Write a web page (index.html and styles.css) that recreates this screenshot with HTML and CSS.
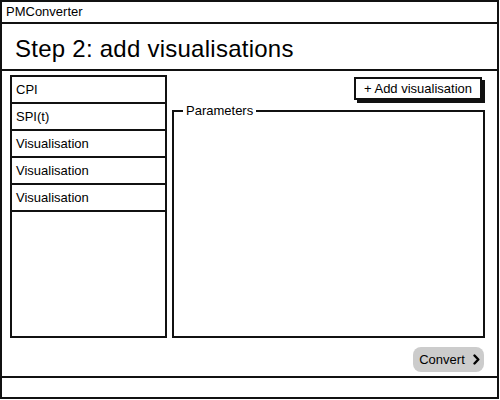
FILE: index.html
```html
<!DOCTYPE html>
<html>
<head>
<meta charset="utf-8">
<link rel="stylesheet" href="styles.css">
</head>
<body>
<div class="app">
  <div class="titlebar">PMConverter</div>
  <div class="header"><h1 class="title">Step 2: add visualisations</h1></div>
  <div class="main">
    <div class="row">
      <ul class="list">
        <li class="item">CPI</li>
        <li class="item">SPI(t)</li>
        <li class="item">Visualisation</li>
        <li class="item">Visualisation</li>
        <li class="item">Visualisation</li>
      </ul>
      <div class="right">
        <button class="add-btn">+ Add visualisation</button>
        <fieldset class="params">
          <legend class="params-legend">Parameters</legend>
        </fieldset>
      </div>
    </div>
    <div class="footer">
      <button class="convert-btn">Convert
        <svg class="chev" width="7" height="11" viewBox="0 0 7 11"><path d="M1.5 1.5 L5.3 5.5 L1.5 9.5" fill="none" stroke="#000" stroke-width="2.4" stroke-linecap="round" stroke-linejoin="round"/></svg>
      </button>
    </div>
  </div>
  <div class="statusbar"></div>
</div>
</body>
</html>
```
FILE: styles.css
```css
html, body {
  margin: 0;
  padding: 0;
  background: #fff;
}
body {
  font-family: "Liberation Sans", Arial, sans-serif;
  font-size: 13px;
  color: #000;
}
.app {
  width: 499px;
  height: 399px;
  box-sizing: border-box;
  border: 2px solid #111;
  display: flex;
  flex-direction: column;
}
.titlebar {
  height: 20px;
  line-height: 20px;
  padding-left: 4px;
  border-bottom: 2px solid #111;
}
.header {
  height: 41px;
  padding-top: 4px;
  border-bottom: 2px solid #111;
}
.title {
  margin: 0;
  padding-left: 13px;
  font-size: 24px;
  font-weight: normal;
  line-height: 41px;
  letter-spacing: 0.25px;
}
.main {
  flex: 1;
  display: flex;
  flex-direction: column;
  padding: 4px 12px 0 8px;
}
.row {
  display: flex;
  gap: 5px;
  height: 263px;
}
.list {
  list-style: none;
  margin: 0;
  padding: 0;
  width: 153px;
  border: 2px solid #111;
}
.item {
  height: 25px;
  line-height: 26px;
  padding-left: 4px;
  border-bottom: 2px solid #111;
}
.right {
  flex: 1;
  display: flex;
  flex-direction: column;
}
.add-btn {
  align-self: flex-end;
  margin: 2px 3px 0 0;
  height: 23px;
  width: 128px;
  box-sizing: border-box;
  border: 2px solid #111;
  background: #fff;
  box-shadow: 3px 3px 0 #111;
  font-family: inherit;
  font-size: 13px;
  color: #000;
  padding: 0;
  text-align: center;
}
.params {
  flex: 1;
  margin: 3px 0 0 0;
  padding: 0 0 0 9px;
  border: 2px solid #111;
  min-width: 0;
}
.params-legend {
  padding: 0 3px;
  line-height: 15px;
  font-size: 13px;
}
.footer {
  display: flex;
  justify-content: flex-end;
  padding-top: 9px;
  padding-right: 1px;
}
.convert-btn {
  width: 71px;
  height: 25px;
  border: none;
  border-radius: 8px;
  background: #cccccc;
  font-family: inherit;
  font-size: 13px;
  color: #000;
  padding: 0 0 0 2px;
  display: flex;
  align-items: center;
  justify-content: center;
  gap: 8px;
}
.chev {
  display: block;
}
.statusbar {
  height: 19px;
  border-top: 2px solid #111;
}
```
